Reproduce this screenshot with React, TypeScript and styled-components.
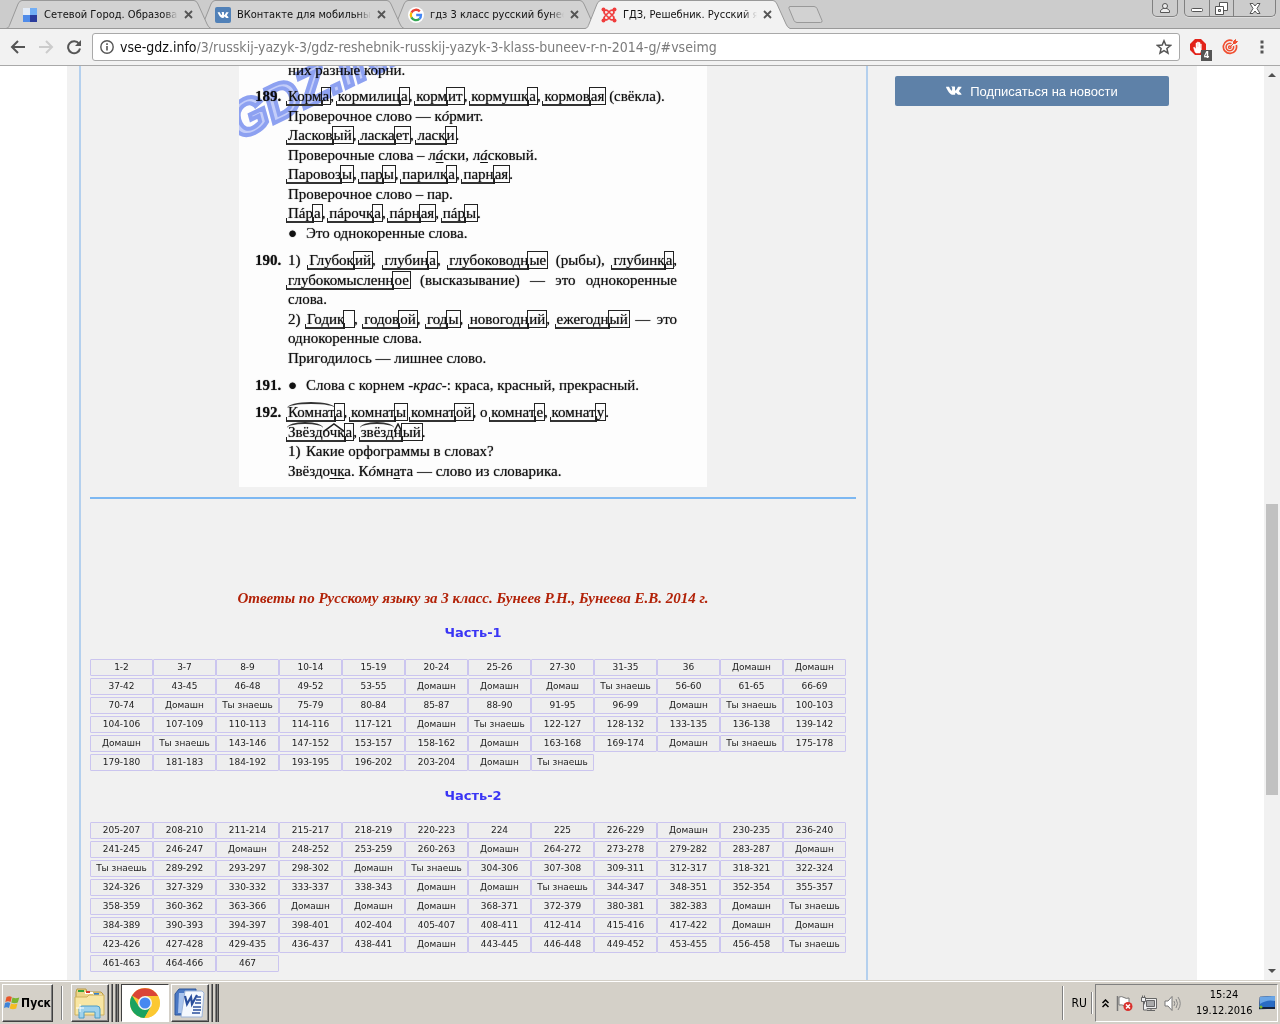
import React from "react";
import styled, { createGlobalStyle, css } from "styled-components";

const uiFont = '"DejaVu Sans Condensed", "DejaVu Sans", sans-serif';

const GlobalStyle = createGlobalStyle`
  *, *::before, *::after { box-sizing: border-box; }
  body { margin: 0; background: #fff; }
  button { padding: 0; border: 0; background: none; font: inherit; color: inherit; }
  a { color: inherit; text-decoration: none; }
  h1, h2 { margin: 0; }
  svg { display: block; flex: none; }
`;

const Desktop = styled.div`
  display: flex;
  flex-direction: column;
  height: 100vh;
  overflow: hidden;
  font-family: ${uiFont};
`;

/* ---------- tab strip ---------- */

const TabStrip = styled.header`
  display: flex;
  flex: none;
  height: 29px;
  padding-left: 6px;
  background: #ccc;
  box-shadow: inset 0 -1px #999;
`;

const TabItem = styled.div<{ $z: number }>`
  position: relative;
  z-index: ${(p) => p.$z};
  display: flex;
  align-items: center;
  flex: 0 1 193px;
  min-width: 0;
  height: 29px;
  padding: 0 6px 0 16px;
  gap: 6px;
`;

const TabShape = styled.svg`
  position: absolute;
  left: 0;
  top: 0;
  z-index: -1;
`;

const TabTitle = styled.a`
  flex: 1;
  min-width: 0;
  overflow: hidden;
  white-space: nowrap;
  font-size: 11px;
  line-height: 18px;
  color: #111;
  mask-image: linear-gradient(90deg, #000 calc(100% - 14px), transparent);
`;

const IconButton = styled.button`
  display: flex;
  align-items: center;
  justify-content: center;
  flex: none;
`;

const NewTab = styled(IconButton)`
  align-self: center;
  margin-left: 10px;
`;

const WindowButtons = styled.div`
  display: flex;
  align-items: flex-start;
  gap: 6px;
  margin-left: auto;
  padding-right: 4px;
`;

const ButtonGroup = styled.div`
  display: flex;
  border: 1px solid #808080;
  border-top: 0;
  border-radius: 0 0 5px 5px;
  overflow: hidden;
  box-shadow: 0 1px #ddd;
`;

const WindowButton = styled(IconButton)<{ $wide?: boolean }>`
  width: ${(p) => (p.$wide ? 42 : 24)}px;
  height: 16px;
  & + & {
    border-left: 1px solid #808080;
  }
`;

/* ---------- toolbar ---------- */

const Toolbar = styled.nav`
  display: flex;
  align-items: center;
  flex: none;
  gap: 10px;
  height: 37px;
  padding: 0 10px;
  background: #f2f2f2;
  border-bottom: 1px solid #a9a9a9;
`;

const Navigation = styled.div`
  display: flex;
  gap: 12px;
`;

const ToolButton = styled(IconButton)`
  width: 16px;
  height: 20px;
  position: relative;
`;

const Omnibox = styled.div`
  display: flex;
  align-items: center;
  flex: 1;
  height: 28px;
  padding: 0 7px;
  background: #fff;
  border: 1px solid #a9a9a9;
  border-radius: 3px;
  font-size: 14px;
  line-height: 20px;
`;

const Host = styled.label`
  margin-left: 6px;
  color: #111;
`;

const PathInput = styled.input`
  flex: 1;
  min-width: 0;
  height: 24px;
  padding: 0;
  border: 0;
  outline: 0;
  background: none;
  font: inherit;
  color: #7b7b7b;
`;

const Extensions = styled.div`
  display: flex;
  gap: 16px;
`;

const Count = styled.span`
  position: absolute;
  right: -6px;
  bottom: -4px;
  width: 11px;
  height: 11px;
  background: #555;
  color: #fff;
  font-size: 9px;
  font-weight: bold;
  line-height: 11px;
  text-align: center;
`;

/* ---------- page ---------- */

const Viewport = styled.div`
  display: flex;
  flex: 1;
  min-height: 0;
  overflow: hidden;
`;

const Page = styled.div`
  flex: 1;
  display: flex;
  min-width: 0;
  padding: 0 67px;
  background: #fff;
`;

const Sheet = styled.div`
  display: flex;
  flex: 1;
  min-width: 0;
  padding-left: 12px;
  background: #f1f1f1;
`;

const Main = styled.main`
  flex: 1;
  min-width: 0;
  padding: 0 10px 0 9px;
  border: solid #b4d0ee;
  border-width: 0 2px;
`;

const Sidebar = styled.aside`
  flex: 0 0 329px;
  padding: 10px 28px 0 27px;
`;

const Subscribe = styled.button`
  display: flex;
  align-items: center;
  justify-content: center;
  gap: 8px;
  width: 100%;
  height: 30px;
  border-radius: 2px;
  background: #5e81a8;
  color: #fff;
  font-family: "Liberation Sans", Arial, sans-serif;
  font-size: 13px;
`;

const Scan = styled.article`
  position: relative;
  display: flex;
  flex-direction: column;
  gap: 8px;
  width: 468px;
  margin: 0 auto 10px;
  padding: 0 30px 6px 16px;
  overflow: hidden;
  background: #fdfdfd;
  color: #111;
  font-family: "Liberation Serif", "Times New Roman", serif;
  font-size: 15px;
  text-shadow: 0 0 1px #555;
`;

const Exercise = styled.section`
  display: grid;
  grid-template-columns: 33px 1fr;
`;

const CutLine = styled.div`
  height: 9px;
  margin: 0 0 4px 33px;
  line-height: 9px;
`;

const Num = styled.b`
  line-height: 19px;
`;

const Line = styled.div<{ $justify?: boolean }>`
  line-height: 19px;
  white-space: nowrap;
  text-align-last: ${(p) => (p.$justify ? "justify" : "left")};
  &:nth-child(even) {
    line-height: 20px;
  }
`;

const Marker = styled.span`
  display: inline-block;
  width: 18px;
  text-align-last: left;
`;

const Stem = styled.span`
  position: relative;
  border-bottom: 2px solid #333;
  &::before {
    content: "";
    position: absolute;
    left: -2px;
    bottom: -2px;
    width: 2px;
    height: 5px;
    border-left: 1px solid #222;
    border-bottom: 2px solid #333;
  }
  &::after {
    content: "";
    position: absolute;
    right: -1px;
    bottom: -2px;
    height: 6px;
    border-right: 2px solid #222;
  }
`;

const Root = styled.span`
  position: relative;
  &::before {
    content: "";
    position: absolute;
    left: -1px;
    right: 0;
    top: -2px;
    height: 12px;
    border-top: 2px solid #333;
    border-radius: 50% 50% 0 0;
  }
`;

const Suffix = styled.span`
  position: relative;
`;

const Caret = styled.svg`
  position: absolute;
  left: 0;
  top: -1px;
  width: 100%;
  height: 9px;
`;

const Ending = styled.span`
  padding: 0 1px;
  outline: 1px solid #222;
`;

const Underlined = styled.u`
  text-underline-offset: 2px;
`;

const Watermark = styled.span`
  position: absolute;
  left: 2px;
  top: 34px;
  transform: rotate(-26deg);
  transform-origin: 0 100%;
  white-space: nowrap;
  font: italic bold 50px/46px "Liberation Sans", Arial, sans-serif;
  color: #c5cffb;
  -webkit-text-stroke: 4px #8ea2f3;
  paint-order: normal;
  text-shadow: none;
  mix-blend-mode: multiply;
`;

const Divider = styled.hr`
  height: 2px;
  margin: 0 0 89px;
  border: 0;
  background: #7db8f2;
`;

const Title = styled.h1`
  color: #b22208;
  text-align: center;
  font: italic bold 15px/20px Georgia, "Liberation Serif", serif;
`;

const Part = styled.h2`
  margin: 15px 0 16px;
  color: #3a35f5;
  text-align: center;
  font: bold 13px/20px Verdana, "DejaVu Sans", sans-serif;
`;

const Cells = styled.div`
  display: grid;
  grid-template-columns: repeat(auto-fill, 63px);
  row-gap: 2px;
`;

const Cell = styled.a`
  height: 17px;
  border: 1px solid #cbc5ef;
  border-radius: 1px;
  background: #eee;
  color: #222;
  text-align: center;
  white-space: nowrap;
  font: 9px/15px Verdana, "DejaVu Sans", sans-serif;
`;

const ScrollBar = styled.div`
  display: flex;
  flex-direction: column;
  flex: 0 0 16px;
  padding: 0 2px;
  background: #f1f1f1;
`;

const ScrollButton = styled(IconButton)`
  height: 18px;
`;

const Track = styled.div<{ $share: number }>`
  flex: ${(p) => p.$share} 1 0;
`;

const Thumb = styled.div`
  flex: 291 1 0;
  background: #c1c1c1;
`;

/* ---------- taskbar ---------- */

const Taskbar = styled.footer`
  display: flex;
  align-items: center;
  flex: none;
  height: 44px;
  padding: 2px 2px 0;
  background: #d4d0c8;
  box-shadow: inset 0 1px #d4d0c8, inset 0 2px #fff;
  color: #000;
`;

const raised = css`
  border: 1px solid;
  border-color: #fff #404040 #404040 #fff;
  box-shadow: inset -1px -1px #808080;
`;

const StartButton = styled.button`
  display: flex;
  align-items: center;
  justify-content: center;
  gap: 1px;
  width: 51px;
  height: 38px;
  ${raised}
  font-weight: bold;
  font-size: 12px;
`;

const Groove = styled.div`
  width: 2px;
  height: 34px;
  margin: 0 8px;
  border-left: 1px solid #808080;
  border-right: 1px solid #fff;
`;

const Apps = styled.div`
  display: flex;
  gap: 2px;
`;

const AppButton = styled.button<{ $active?: boolean }>`
  display: flex;
  align-items: center;
  justify-content: center;
  width: ${(p) => (p.$active ? 48 : 38)}px;
  height: 38px;
  ${raised}
  ${(p) =>
    p.$active &&
    css`
      border-color: #404040 #fff #fff #404040;
      background: #fff;
      box-shadow: none;
    `}
`;

const Stack = styled.div`
  display: flex;
  &::after {
    content: "";
    width: 10px;
    background: linear-gradient(
      90deg,
      #d4d0c8 2px,
      #808080 2px 3px,
      #404040 3px 4px,
      #d4d0c8 4px 6px,
      #808080 6px 7px,
      #404040 7px 8px,
      #808080 8px 9px,
      #404040 9px
    );
  }
`;

const Right = styled.div`
  display: flex;
  align-items: center;
  margin-left: auto;
`;

const Language = styled.button`
  font-size: 12px;
`;

const ShortGroove = styled(Groove)`
  height: 22px;
  margin: 0 2px 0 4px;
`;

const Tray = styled.div`
  display: flex;
  align-items: center;
  gap: 7px;
  height: 38px;
  padding: 0 2px 0 6px;
  border: 1px solid;
  border-color: #808080 #fff #fff #808080;
`;

const Clock = styled.time`
  width: 56px;
  margin-left: 8px;
  text-align: center;
  font-size: 11px;
  line-height: 16px;
`;

/* ---------- drawings ---------- */

const CloseX = () => (
  <svg width="9" height="9" viewBox="0 0 9 9">
    <path d="M1 1l7 7M8 1l-7 7" stroke="#555" strokeWidth="1.8" />
  </svg>
);

const CityIcon = () => (
  <svg width="16" height="16" viewBox="0 0 16 16">
    <path d="M1 1h7v7H1z" fill="#e3ecf8" />
    <path d="M8 1h7v7H8z" fill="#72aef5" />
    <path d="M1 8h7v7H1z" fill="#4f8be9" />
    <path d="M8 8h7v7H8z" fill="#2b3c9c" />
  </svg>
);

const vkPath =
  "M8.7 9.6h1s.3 0 .4-.2c.2-.2.1-.5.1-.5s0-1.5.7-1.7c.7-.2 1.600 1.500 2.500 2.100.7.5 1.200.4 1.200.4l2.500 0s1.300-.1.700-1.100c0-.1-.4-.8-1.900-2.200-1.600-1.500-1.400-1.200.5-3.900C17.600.9 18.100.0 18 0c-.1-.3-1.100-.2-1.100-.2h-2.800s-.2 0-.4.1c-.1.1-.2.3-.2.3s-.5 1.200-1.100 2.200C11.100 4.500 10.600 4.700 10.400 4.500c-.5-.3-.4-1.200-.4-1.900 0-2.100.3-2.900-.6-3.100-.3-.1-.5-.1-1.300-.1-1 0-1.800 0-2.300.2-.3.2-.6.5-.4.5.2 0 .6.1.8.4.3.4.3 1.300.3 1.300s.2 2.500-.4 2.800c-.4.200-.900-.200-2.100-2.300C3.400 1.400 2.900.2 2.900.2s-.1-.2-.2-.3c-.2-.1-.5-.2-.5-.2H-.4s-.4 0-.5.2c-.1.1 0 .4 0 .4s2.100 4.900 4.500 7.300c2.200 2.300 5.100 2 5.100 2z";

const VkFavicon = () => (
  <svg width="16" height="16" viewBox="0 0 16 16">
    <rect width="16" height="16" rx="2" fill="#5181b8" />
    <path transform="translate(3.200 5.300) scale(.58)" d={vkPath} fill="#fff" />
  </svg>
);

const VkMark = () => (
  <svg width="16" height="10" viewBox="-1 -.5 19.500 11">
    <path d={vkPath} fill="#fff" />
  </svg>
);

const GoogleIcon = () => (
  <svg width="16" height="16" viewBox="0 0 16 16">
    <circle cx="8" cy="8" r="8" fill="#fff" />
    <g fill="none" strokeWidth="2.300">
      <path d="M11.800 4.400A5.200 5.200 0 0 0 3.400 5.600" stroke="#ea4335" />
      <path d="M3.400 5.600a5.200 5.200 0 0 0 0 4.800" stroke="#fbbc05" />
      <path d="M3.400 10.400a5.200 5.200 0 0 0 8 1.500" stroke="#34a853" />
      <path d="M11.400 11.900A5 5 0 0 0 13 8H8.200" stroke="#4285f4" />
    </g>
  </svg>
);

const JoomlaIcon = () => (
  <svg width="16" height="16" viewBox="0 0 16 16" fill="none" stroke="#f03c3c" strokeWidth="1.700">
    <path d="M3.500 6.500C2 3.500 5 2 7 4l5.500 5.500M9.500 3.500C12.500 2 14 5 12 7l-5.500 5.500M12.500 9.500C14 12.500 11 14 9 12L3.500 6.500M6.500 12.500C3.500 14 2 11 4 9l5.500-5.500" />
    <g fill="#f03c3c" stroke="none">
      <circle cx="2.500" cy="2.500" r="2" />
      <circle cx="13.500" cy="2.500" r="2" />
      <circle cx="2.500" cy="13.500" r="2" />
      <circle cx="13.500" cy="13.500" r="2" />
    </g>
  </svg>
);

const ArrowIcon = ({ color, flip }: { color: string; flip?: boolean }) => (
  <svg width="16" height="16" viewBox="0 0 16 16" fill="none" stroke={color} strokeWidth="2">
    <path d={flip ? "M1 8h13M8 2l6 6-6 6" : "M15 8H2M8 2L2 8l6 6"} />
  </svg>
);

const ReloadIcon = () => (
  <svg width="16" height="16" viewBox="0 0 16 16">
    <path d="M13 4.800A6 6 0 1 0 14 9.500" fill="none" stroke="#555" strokeWidth="2" />
    <path d="M15 1v6H9z" fill="#555" />
  </svg>
);

const InfoIcon = () => (
  <svg width="14" height="14" viewBox="0 0 14 14">
    <circle cx="7" cy="7" r="6.200" fill="none" stroke="#555" strokeWidth="1.400" />
    <path d="M7 6v4.500M7 3.300v1.600" stroke="#555" strokeWidth="1.600" />
  </svg>
);

const StarIcon = () => (
  <svg width="16" height="16" viewBox="0 0 16 16">
    <path d="M8 1.800l1.800 4.300 4.700.4-3.600 3 1.100 4.600L8 11.700l-4 2.400 1.100-4.600-3.600-3 4.700-.4z" fill="none" stroke="#555" strokeWidth="1.500" />
  </svg>
);

const AdblockIcon = () => (
  <svg width="16" height="16" viewBox="0 0 16 16">
    <path d="M5 0h6l5 5v6l-5 5H5l-5-5V5z" fill="#e2231a" />
    <path d="M5 13L3.500 8.500l1-.3L6 10V4h1v4h.3V3h1.200v5h.3V3.500H10V9h.3V5h1v6l-1.300 3H6z" fill="#fff" stroke="#fff" strokeWidth=".5" />
  </svg>
);

const TargetIcon = () => (
  <svg width="16" height="16" viewBox="0 0 16 16" fill="none" stroke="#f04e30">
    <path d="M10.500 1.700A6.600 6.600 0 1 0 14.300 6" strokeWidth="1.700" />
    <path d="M9.500 4.600A3.800 3.800 0 1 0 11.500 7" strokeWidth="1.500" />
    <circle cx="7.800" cy="8.200" r="1.200" strokeWidth="1.400" />
    <path d="M8 8l4-4M11.500 4.500V2.500l2-2v2h2l-2 2z" fill="#f04e30" />
  </svg>
);

const DotsIcon = () => (
  <svg width="16" height="16" viewBox="0 0 16 16" fill="#555">
    <path d="M6.500 1.500h3v3h-3zM6.500 6.500h3v3h-3zM6.500 11.500h3v3h-3z" />
  </svg>
);

const UserGlyph = () => (
  <svg width="12" height="12" viewBox="0 0 12 12" fill="#eee" stroke="#555">
    <path d="M1.500 10.500v-2L4 6.500h4l2.500 2v2z" />
    <circle cx="6" cy="4" r="2.500" />
  </svg>
);

const MinimizeGlyph = () => (
  <svg width="12" height="12" viewBox="0 0 12 12">
    <rect x=".5" y="6.500" width="11" height="3" rx="1" fill="#fff" stroke="#555" />
  </svg>
);

const RestoreGlyph = () => (
  <svg width="13" height="13" viewBox="0 0 13 13" fill="#fff" stroke="#555">
    <path d="M4.500.5h8v8h-8z" />
    <path d="M.5 4.500h8v8h-8z" />
    <path d="M3.500 7.500h2v2h-2z" fill="#ccc" />
  </svg>
);

const CloseGlyph = () => (
  <svg width="12" height="11" viewBox="0 0 12 11">
    <path d="M1 .5h3l2 2.500 2-2.500h3L8 5.500l3 5H8L6 8l-2 2.500H1l3-5z" fill="#fff" stroke="#555" />
  </svg>
);

const ScrollArrow = ({ down }: { down?: boolean }) => (
  <svg width="8" height="4" viewBox="0 0 8 4">
    <path d={down ? "M0 0h8L4 4z" : "M0 4h8L4 0z"} fill="#505050" />
  </svg>
);

const WindowsFlag = () => (
  <svg width="16" height="14" viewBox="0 0 16 14">
    <path d="M2.500 1q3-1.500 5.300 0L6.600 6q-2.500-1.500-5.300 0z" fill="#e8562a" />
    <path d="M8.500 1.500q3 1.500 6.800 0L13.800 6.500q-3.200 1.500-6.500 0z" fill="#7ab530" />
    <path d="M1 7q3-1.500 5.300 0L5 12q-2.500-1.500-5 0z" fill="#3f84d8" />
    <path d="M7 7.500q3.200 1.500 6.500 0L12.200 12.500q-3.200 1.500-6.500 0z" fill="#f6bc22" />
  </svg>
);

const FolderIcon = () => (
  <svg width="32" height="32" viewBox="0 0 32 32">
    <path d="M2 5l1-3h9l1 3h14l2 2v20H2z" fill="#ecd487" stroke="#b99a45" />
    <path d="M4 3h6v2H4z" fill="#2fa33a" />
    <path d="M11 5h8v2h-8z" fill="#fff" />
    <path d="M12 4h4v2h-4z" fill="#d63a2b" />
    <path d="M19 7h9v3h-9z" fill="#fff" />
    <path d="M20 6h5v2h-5z" fill="#2d7fd6" />
    <path d="M1 10h12l2-2h15v20H1z" fill="#f8e6a4" stroke="#cdb05c" />
    <path d="M5 31V22q0-3 3-3h15q3 0 3 3v9h-5v-6H10v6z" fill="#9fd2ec" stroke="#4a9cc9" />
    <path d="M6 17v8M2 21h8" stroke="#fff" />
  </svg>
);

const ChromeIcon = () => (
  <svg width="30" height="30" viewBox="0 0 30 30">
    <circle cx="15" cy="15" r="15" fill="#fbc832" />
    <path d="M15 15L2 7.500A15 15 0 0 1 28 8H15z" fill="#da4437" />
    <path d="M2 7.500A15 15 0 0 0 14.500 30L21 18.500 15 15 8.900 18.500z" fill="#1aa260" />
    <path d="M28 8H15l6 10.500L14.500 30A15 15 0 0 0 28 8z" fill="#fbc832" />
    <circle cx="15" cy="15" r="7" fill="#f4f4f4" />
    <circle cx="15" cy="15" r="5.500" fill="#4688f1" />
  </svg>
);

const WordIcon = () => (
  <svg width="32" height="30" viewBox="0 0 32 30">
    <path d="M5 1h17v26H1V6z" fill="#4a78c4" stroke="#2f5799" />
    <path d="M5 5h14v20H4z" fill="#a9c4ee" />
    <path d="M11 3h17l2 2-2 24H7z" fill="#f4f8fe" stroke="#9db4d8" />
    <path d="M11 8l2 8 4-7 1 7 5-9" fill="none" stroke="#2a4f9d" strokeWidth="2.200" />
    <path d="M23 9h4M22 12h5M21 15h6M19 19h8M19 22h8M18 25h8" stroke="#2a4f9d" strokeWidth="1.600" />
  </svg>
);

const ChevronsUp = () => (
  <svg width="7" height="9" viewBox="0 0 7 9" fill="none" stroke="#000" strokeWidth="1.500">
    <path d="M.5 4l3-3 3 3M.5 8l3-3 3 3" />
  </svg>
);

const FlagIcon = () => (
  <svg width="17" height="17" viewBox="0 0 17 17">
    <path d="M1.500 1v15" stroke="#777" strokeWidth="1.500" />
    <path d="M3 2q3-1 5 .5t5 .5v8q-3 .5-5-.5T3 10z" fill="#fff" stroke="#777" />
    <circle cx="12" cy="11.500" r="4.500" fill="#d9302c" />
    <path d="M10 9.500l4 4M14 9.500l-4 4" stroke="#fff" strokeWidth="1.500" />
  </svg>
);

const NetworkIcon = () => (
  <svg width="17" height="17" viewBox="0 0 17 17" fill="#eee" stroke="#666">
    <path d="M4.500 3.500h12v10h-12z" />
    <path d="M6.500 5.500h8v6h-8z" fill="#aaa" />
    <path d="M7 15.500h8M11 14v1M3.500 7v8h4" />
    <path d="M1.500 2.500h4v4h-4zM2.500.5v2M4.500.5v2" />
  </svg>
);

const SpeakerIcon = () => (
  <svg width="17" height="17" viewBox="0 0 17 17">
    <path d="M1 6h3l4-4.500v14L4 11H1z" fill="#fff" stroke="#777" />
    <path d="M10 6q1.500 2.500 0 5M12 4q3 4.500 0 9M14 2q4.500 6.500 0 13" fill="none" stroke="#888" />
  </svg>
);

const DesktopIcon = () => (
  <svg width="16" height="14" viewBox="0 0 16 14">
    <path d="M1 1l15-1v12L0 13z" fill="#2a6cc4" stroke="#1c3f7c" strokeWidth=".6" />
    <path d="M1 1l15-1v5Q8 3 1 8z" fill="#6ba6e6" />
    <path d="M0 11h16v2H0z" fill="#16233d" />
    <circle cx="2" cy="11" r="1.500" fill="#7ab530" />
  </svg>
);

/* ---------- data ---------- */

const tabs = [
  { title: "Сетевой Город. Образован", icon: <CityIcon /> },
  { title: "ВКонтакте для мобильных", icon: <VkFavicon /> },
  { title: "гдз 3 класс русский бунее", icon: <GoogleIcon /> },
  { title: "ГДЗ, Решебник. Русский я", icon: <JoomlaIcon />, active: true },
];

const D = "Домашн";
const T = "Ты знаешь";

const part1 = [
  "1-2", "3-7", "8-9", "10-14", "15-19", "20-24", "25-26", "27-30", "31-35", "36", D, D,
  "37-42", "43-45", "46-48", "49-52", "53-55", D, D, "Домаш", T, "56-60", "61-65", "66-69",
  "70-74", D, T, "75-79", "80-84", "85-87", "88-90", "91-95", "96-99", D, T, "100-103",
  "104-106", "107-109", "110-113", "114-116", "117-121", D, T, "122-127", "128-132", "133-135", "136-138", "139-142",
  D, T, "143-146", "147-152", "153-157", "158-162", D, "163-168", "169-174", D, T, "175-178",
  "179-180", "181-183", "184-192", "193-195", "196-202", "203-204", D, T,
];

const part2 = [
  "205-207", "208-210", "211-214", "215-217", "218-219", "220-223", "224", "225", "226-229", D, "230-235", "236-240",
  "241-245", "246-247", D, "248-252", "253-259", "260-263", D, "264-272", "273-278", "279-282", "283-287", D,
  T, "289-292", "293-297", "298-302", D, T, "304-306", "307-308", "309-311", "312-317", "318-321", "322-324",
  "324-326", "327-329", "330-332", "333-337", "338-343", D, D, T, "344-347", "348-351", "352-354", "355-357",
  "358-359", "360-362", "363-366", D, D, D, "368-371", "372-379", "380-381", "382-383", D, T,
  "384-389", "390-393", "394-397", "398-401", "402-404", "405-407", "408-411", "412-414", "415-416", "417-422", D, D,
  "423-426", "427-428", "429-435", "436-437", "438-441", D, "443-445", "446-448", "449-452", "453-455", "456-458", T,
  "461-463", "464-466", "467",
];

const W = ({ s, e }: { s: React.ReactNode; e: string }) => (
  <>
    <Stem>{s}</Stem>
    <Ending>{e}</Ending>
  </>
);

const Roof = ({ children }: { children: React.ReactNode }) => (
  <Suffix>
    {children}
    <Caret viewBox="0 0 20 9" preserveAspectRatio="none">
      <path d="M0 9L10 1l10 8" fill="none" stroke="#222" strokeWidth="1.500" vectorEffect="non-scaling-stroke" />
    </Caret>
  </Suffix>
);

const CellGrid = ({ items }: { items: string[] }) => (
  <Cells>
    {items.map((t, i) => (
      <Cell key={i} href="#vseimg">
        {t}
      </Cell>
    ))}
  </Cells>
);

export default function App() {
  return (
    <Desktop>
      <GlobalStyle />
      <TabStrip>
        {tabs.map((t, i) => (
          <TabItem key={t.title} $z={t.active ? 9 : 5 - i}>
            <TabShape width="206" height="29" viewBox="0 0 206 29">
              <path
                d="M0 28.500C3 28 3 26 4 24L12 4q1.500-3.500 4-3.500H188q2.500 0 4 3.500L201 24q1 3 4 4.500V29H0z"
                fill={t.active ? "#f2f2f2" : "#d2d2d2"}
              />
              <path
                d={
                  "M0 28.500C3 28 3 26 4 24L12 4q1.500-3.500 4-3.500H188q2.500 0 4 3.500L201 24q1 3 4 4.500" +
                  (t.active ? "" : "H0")
                }
                fill="none"
                stroke="#999"
              />
            </TabShape>
            {t.icon}
            <TabTitle href="#">{t.title}</TabTitle>
            <IconButton aria-label="Закрыть вкладку">
              <CloseX />
            </IconButton>
          </TabItem>
        ))}
        <NewTab aria-label="Новая вкладка">
          <svg width="36" height="17" viewBox="0 0 36 17">
            <path d="M2 .5h24q2 0 3 2l5 12q.5 2-1.500 2H9q-2 0-3-2L1 2.500Q.5.5 2 .5z" fill="#d2d2d2" stroke="#999" />
          </svg>
        </NewTab>
        <WindowButtons>
          <ButtonGroup>
            <WindowButton aria-label="Пользователь"><UserGlyph /></WindowButton>
          </ButtonGroup>
          <ButtonGroup>
            <WindowButton aria-label="Свернуть"><MinimizeGlyph /></WindowButton>
            <WindowButton aria-label="Восстановить"><RestoreGlyph /></WindowButton>
            <WindowButton $wide aria-label="Закрыть"><CloseGlyph /></WindowButton>
          </ButtonGroup>
        </WindowButtons>
      </TabStrip>

      <Toolbar>
        <Navigation>
          <ToolButton aria-label="Назад"><ArrowIcon color="#555" /></ToolButton>
          <ToolButton aria-label="Вперёд"><ArrowIcon color="#ccc" flip /></ToolButton>
          <ToolButton aria-label="Обновить"><ReloadIcon /></ToolButton>
        </Navigation>
        <Omnibox>
          <InfoIcon />
          <Host htmlFor="address">vse-gdz.info</Host>
          <PathInput
            id="address"
            defaultValue="/3/russkij-yazyk-3/gdz-reshebnik-russkij-yazyk-3-klass-buneev-r-n-2014-g/#vseimg"
          />
          <IconButton aria-label="Добавить в закладки"><StarIcon /></IconButton>
        </Omnibox>
        <Extensions>
          <ToolButton aria-label="Блокировщик рекламы">
            <AdblockIcon />
            <Count>4</Count>
          </ToolButton>
          <ToolButton aria-label="Цель"><TargetIcon /></ToolButton>
          <ToolButton aria-label="Меню"><DotsIcon /></ToolButton>
        </Extensions>
      </Toolbar>

      <Viewport>
        <Page>
          <Sheet>
            <Main>
              <Scan>
                <Watermark>GDZ.INFO</Watermark>
                <CutLine>них разные корни.</CutLine>
                <Exercise>
                  <Num>189.</Num>
                  <div>
                    <Line>
                      <W s="Корм" e="а" />, <W s="кормилиц" e="а" />, <W s="корм" e="ит" />, <W s="кормушк" e="а" />,{" "}
                      <W s="кормов" e="ая" /> (свёкла).
                    </Line>
                    <Line>Проверочное слово — к<i>ó</i>рмит.</Line>
                    <Line>
                      <W s="Ласков" e="ый" />, <W s="ласка" e="ет" />, <W s="ласк" e="и" />.
                    </Line>
                    <Line>
                      Проверочные слова – л<Underlined><i>á</i></Underlined>ски, л<Underlined><i>á</i></Underlined>сковый.
                    </Line>
                    <Line>
                      <W s="Паровоз" e="ы" />, <W s="пар" e="ы" />, <W s="парилк" e="а" />, <W s="парн" e="ая" />.
                    </Line>
                    <Line>Проверочное слово – пар.</Line>
                    <Line>
                      <W s="Пáр" e="а" />, <W s="пáрочк" e="а" />, <W s="пáрн" e="ая" />, <W s="пáр" e="ы" />.
                    </Line>
                    <Line><Marker>●</Marker>Это однокоренные слова.</Line>
                  </div>
                </Exercise>
                <Exercise>
                  <Num>190.</Num>
                  <div>
                    <Line $justify>
                      1) <W s="Глубок" e="ий" />, <W s="глубин" e="а" />, <W s="глубоководн" e="ые" /> (рыбы),{" "}
                      <W s="глубинк" e="а" />,
                    </Line>
                    <Line $justify>
                      <W s="глубокомысленн" e="ое" /> (высказывание) — это однокоренные
                    </Line>
                    <Line>слова.</Line>
                    <Line $justify>
                      2) <W s="Годик" e={"\u2002"} />, <W s="годов" e="ой" />, <W s="год" e="ы" />,{" "}
                      <W s="новогодн" e="ий" />, <W s="ежегодн" e="ый" /> — это
                    </Line>
                    <Line>однокоренные слова.</Line>
                    <Line>Пригодилось — лишнее слово.</Line>
                  </div>
                </Exercise>
                <Exercise>
                  <Num>191.</Num>
                  <div>
                    <Line><Marker>●</Marker>Слова с корнем -<i>крас</i>-: краса, красный, прекрасный.</Line>
                  </div>
                </Exercise>
                <Exercise>
                  <Num>192.</Num>
                  <div>
                    <Line>
                      <W s={<Root>Комнат</Root>} e="а" />, <W s="комнат" e="ы" /> <W s="комнат" e="ой" />, о{" "}
                      <W s="комнат" e="е" />, <W s="комнат" e="у" />.
                    </Line>
                    <Line>
                      <W s={<><Root>Звёзд</Root><Roof>очк</Roof></>} e="а" />,{" "}
                      <W s={<><Root>звёзд</Root><Roof>н</Roof></>} e="ый" />.
                    </Line>
                    <Line><Marker>1)</Marker>Какие орфограммы в словах?</Line>
                    <Line>
                      Звёздо<Underlined>чк</Underlined>а. К<i>ó</i>мн<Underlined>а</Underlined>та — слово из словарика.
                    </Line>
                  </div>
                </Exercise>
              </Scan>
              <Divider />
              <Title>Ответы по Русскому языку за 3 класс. Бунеев Р.Н., Бунеева Е.В. 2014 г.</Title>
              <Part>Часть-1</Part>
              <CellGrid items={part1} />
              <Part>Часть-2</Part>
              <CellGrid items={part2} />
            </Main>
            <Sidebar>
              <Subscribe>
                <VkMark />
                Подписаться на новости
              </Subscribe>
            </Sidebar>
          </Sheet>
        </Page>
        <ScrollBar>
          <ScrollButton aria-label="Вверх"><ScrollArrow /></ScrollButton>
          <Track $share={420} />
          <Thumb />
          <Track $share={167} />
          <ScrollButton aria-label="Вниз"><ScrollArrow down /></ScrollButton>
        </ScrollBar>
      </Viewport>

      <Taskbar>
        <StartButton>
          <WindowsFlag />
          Пуск
        </StartButton>
        <Groove />
        <Apps>
          <Stack>
            <AppButton aria-label="Проводник"><FolderIcon /></AppButton>
          </Stack>
          <AppButton $active aria-label="Chrome"><ChromeIcon /></AppButton>
          <Stack>
            <AppButton aria-label="Word"><WordIcon /></AppButton>
          </Stack>
        </Apps>
        <Right>
          <Groove />
          <Language>RU</Language>
          <ShortGroove />
          <Tray>
            <ChevronsUp />
            <FlagIcon />
            <NetworkIcon />
            <SpeakerIcon />
            <Clock>
              15:24
              <br />
              19.12.2016
            </Clock>
            <DesktopIcon />
          </Tray>
        </Right>
      </Taskbar>
    </Desktop>
  );
}
